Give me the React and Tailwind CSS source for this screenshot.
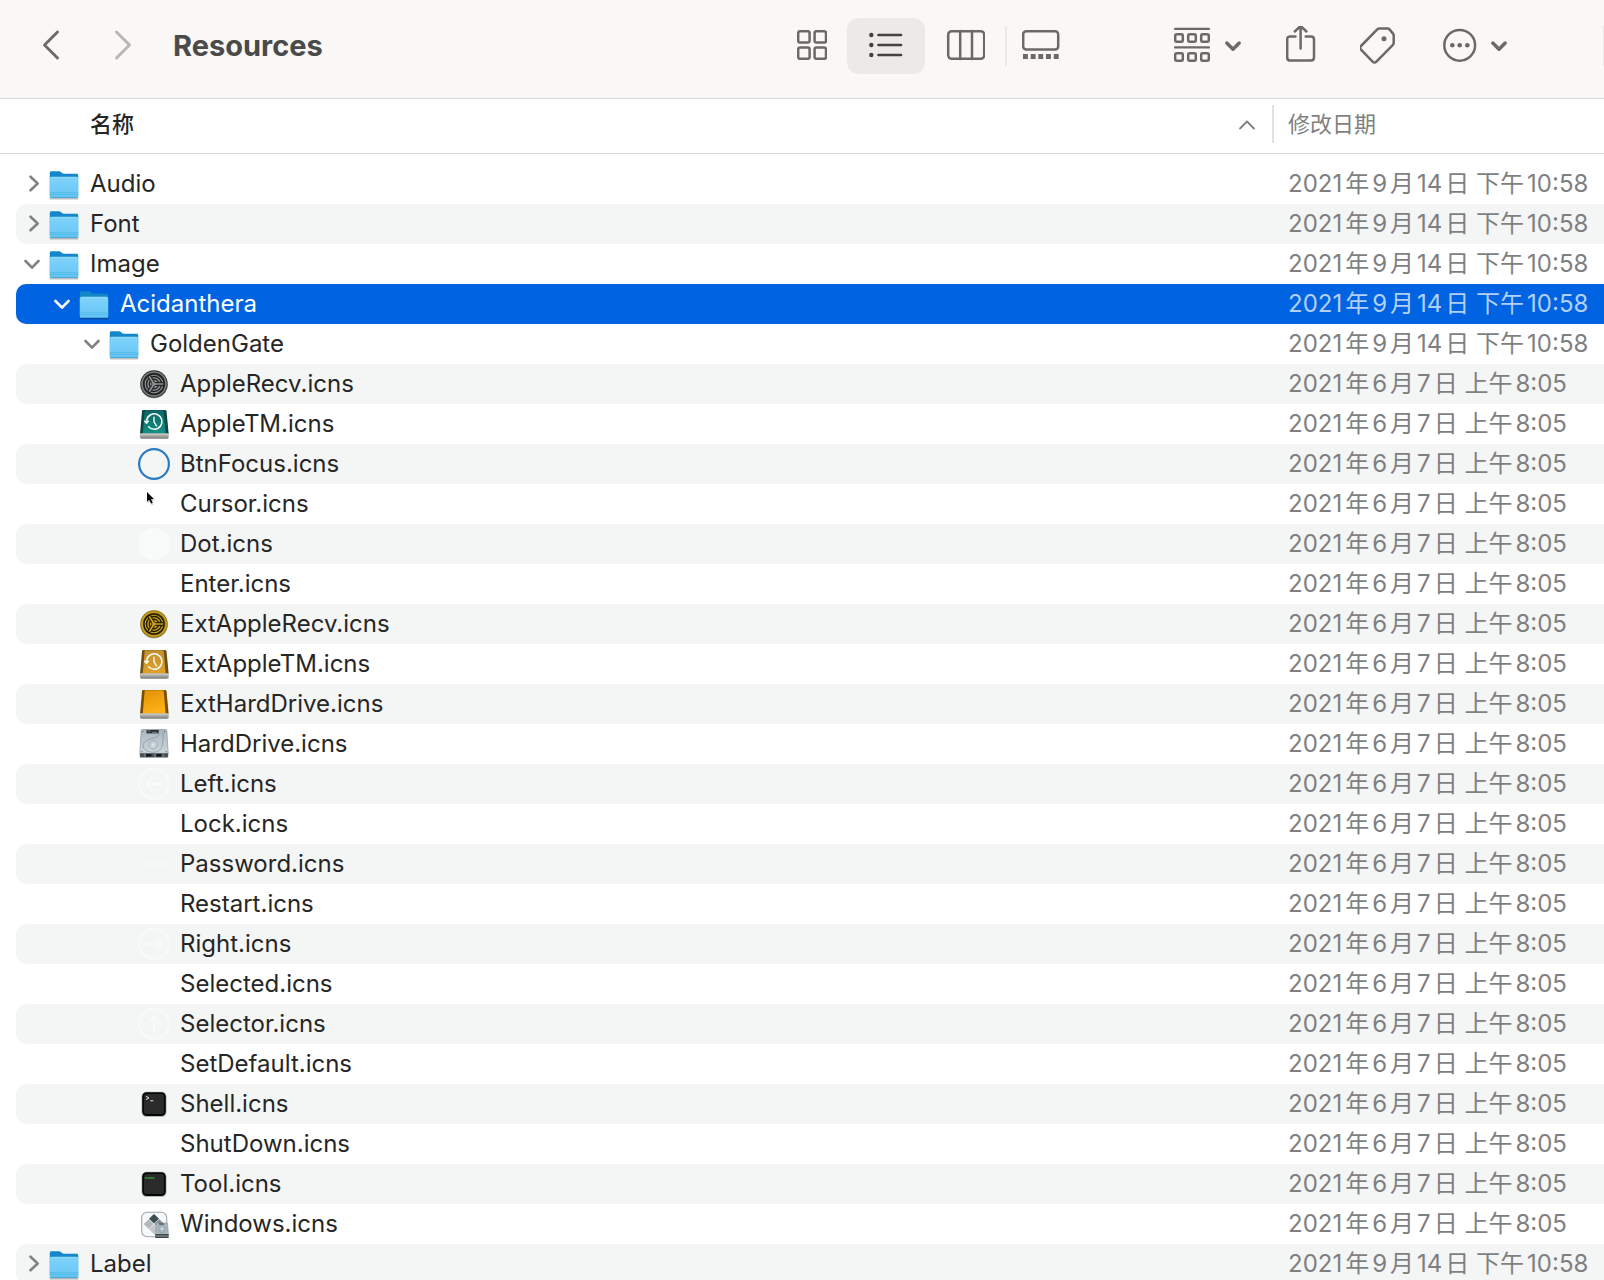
import React, { useState } from 'react';

const FOLDER_DATE = '2021年9月14日 下午10:58';
const FILE_DATE = '2021年6月7日 上午8:05';

const rows = [
  { name: 'Audio', level: 0, folder: true },
  { name: 'Font', level: 0, folder: true },
  { name: 'Image', level: 0, folder: true, open: true },
  { name: 'Acidanthera', level: 1, folder: true, open: true },
  { name: 'GoldenGate', level: 2, folder: true, open: true },
  { name: 'AppleRecv.icns', level: 3, icon: 'recv' },
  { name: 'AppleTM.icns', level: 3, icon: 'tm' },
  { name: 'BtnFocus.icns', level: 3, icon: 'focus' },
  { name: 'Cursor.icns', level: 3, icon: 'cursor' },
  { name: 'Dot.icns', level: 3, icon: 'dot' },
  { name: 'Enter.icns', level: 3 },
  { name: 'ExtAppleRecv.icns', level: 3, icon: 'extRecv' },
  { name: 'ExtAppleTM.icns', level: 3, icon: 'extTm' },
  { name: 'ExtHardDrive.icns', level: 3, icon: 'extDrive' },
  { name: 'HardDrive.icns', level: 3, icon: 'drive' },
  { name: 'Left.icns', level: 3, icon: 'left' },
  { name: 'Lock.icns', level: 3 },
  { name: 'Password.icns', level: 3, icon: 'password' },
  { name: 'Restart.icns', level: 3, icon: 'restart' },
  { name: 'Right.icns', level: 3, icon: 'right' },
  { name: 'Selected.icns', level: 3 },
  { name: 'Selector.icns', level: 3, icon: 'up' },
  { name: 'SetDefault.icns', level: 3 },
  { name: 'Shell.icns', level: 3, icon: 'shell' },
  { name: 'ShutDown.icns', level: 3, icon: 'shutdown' },
  { name: 'Tool.icns', level: 3, icon: 'tool' },
  { name: 'Windows.icns', level: 3, icon: 'windows' },
  { name: 'Label', level: 0, folder: true },
];

const indent = ['pl-2', 'pl-[38px]', 'pl-[68px]', 'pl-[98px]'];

// Shared gradients, referenced by id from the row icons
const Gradients = () => (
  <svg width="0" height="0" className="absolute" aria-hidden="true">
    <defs>
      <linearGradient id="folderFront" x1="0" y1="0" x2="0" y2="1">
        <stop offset="0" stopColor="#7fd3fc" />
        <stop offset="1" stopColor="#66c6f5" />
      </linearGradient>
      <linearGradient id="tealTop" x1="0" y1="0" x2="0" y2="1">
        <stop offset="0" stopColor="#0c6663" />
        <stop offset="1" stopColor="#149086" />
      </linearGradient>
      <linearGradient id="amberTop" x1="0" y1="0" x2="0" y2="1">
        <stop offset="0" stopColor="#c4912c" />
        <stop offset="1" stopColor="#dfa127" />
      </linearGradient>
      <linearGradient id="orangeTop" x1="0" y1="0" x2="0.3" y2="1">
        <stop offset="0" stopColor="#e29106" />
        <stop offset="1" stopColor="#fcb116" />
      </linearGradient>
      <linearGradient id="base" x1="0" y1="0" x2="0" y2="1">
        <stop offset="0" stopColor="#c8c8c4" />
        <stop offset="1" stopColor="#7c7c78" />
      </linearGradient>
      <linearGradient id="steel" x1="0" y1="0" x2="0" y2="1">
        <stop offset="0" stopColor="#a9b6be" />
        <stop offset="1" stopColor="#cdd7dc" />
      </linearGradient>
    </defs>
  </svg>
);

const Folder = () => (
  <>
    <path d="M1.600 29.200h28.800v1.400a1 1 0 0 1-1 1H2.600a1 1 0 0 1-1-1z" fill="#000" opacity=".25" />
    <path d="M1.800 4.800c0-1 .6-1.600 1.600-1.600h7.400c1 0 1.600.3 2.200.9l1 .9c.5.5 1 .7 1.800.7h12.800c1 0 1.600.6 1.600 1.600V28H1.800z" fill="#1487c9" />
    <path d="M1.800 10.600c0-1 .6-1.600 1.600-1.600h25.200c1 0 1.600.6 1.600 1.600v18c0 .9-.6 1.500-1.500 1.500H3.300c-.9 0-1.500-.6-1.500-1.500z" fill="url(#folderFront)" />
    <path d="M3 9.200h26.200" stroke="#9ae0ff" strokeWidth=".8" />
    <path d="M2 24.800h28.200M2 26.600h28.200" stroke="#4bb2e4" strokeWidth=".7" />
    <path d="M2.500 29.400h27.200" stroke="#43a6d8" strokeWidth="1" />
  </>
);

const Gear = ({ rim, edge, dark, metal }) => (
  <>
    <circle cx="16" cy="16.900" r="13.700" fill="#000" opacity=".25" />
    <circle cx="16" cy="16" r="13.700" fill={edge} />
    <circle cx="16" cy="16" r="12" fill="none" stroke={rim} strokeWidth="1.700" />
    <circle cx="16" cy="16" r="10.800" fill={dark} />
    <circle cx="16" cy="16" r="8.800" fill="none" stroke={metal} strokeWidth="1.100" />
    <circle cx="16" cy="16" r="6.800" fill={metal} />
    <circle cx="16" cy="16" r="4.700" fill="none" stroke={dark} strokeWidth="1.500" />
    <path d="M16 16h9.500M16 16l-5-8M16 16l-5 8" stroke={dark} strokeWidth="3.800" />
    <path d="M16 16h9.200M16 16l-4.800-7.800M16 16l-4.800 7.800" stroke={metal} strokeWidth="1.700" />
    <circle cx="16" cy="16" r="1.800" fill={metal} />
  </>
);

const Drive = ({ top, side, clock, led }) => (
  <>
    <path d="M5.400 2h21.600c.8 0 1.300.4 1.500 1.200L30.700 26H2L4 3.200C4.100 2.400 4.600 2 5.400 2z" fill={side} />
    <path d="M6.700 2.300h19L27.600 25.400H4.800z" fill={top} />
    <path d="M2 25.600h28.700v3.400c0 1-.7 1.700-1.700 1.700H3.700c-1 0-1.700-.7-1.700-1.700z" fill="url(#base)" />
    <path d="M2.200 25.900h28.300" stroke="#dededa" strokeWidth=".6" />
    {led && <circle cx="27.500" cy="28.200" r=".8" fill="#58c04a" />}
    {clock && (
      <g fill="none" stroke="#f4fbfa" strokeLinecap="round">
        <path d="M8.700 12A7.700 7.700 0 1 1 10.600 18.800" strokeWidth="1.500" />
        <path d="M16 9.300v4.600l2.500 3.900" strokeWidth="1.400" />
        <path d="M6.500 13h4.400l-2.200 2.700z" fill="#f4fbfa" strokeWidth=".8" />
      </g>
    )}
  </>
);

const HardDrive = () => (
  <>
    <path d="M4.300 1.500h23.400c.6 0 1 .3 1.100.9l1.400 23H1.800l1.400-23c.1-.6.500-.9 1.100-.9z" fill="url(#steel)" stroke="#7e8a91" strokeWidth=".6" />
    <path d="M8.500 2h12.200v3.400H8.500z" fill="#2c3134" />
    <path d="M9.500 3h3M14 4.400h5" stroke="#98a3a9" strokeWidth=".7" />
    <path d="M21 5.400c0 3-3 4.300-7 5.200-5 1.200-8.800 3-8.800 6.900 0 4.200 4.300 6.700 10 6.700 5.600 0 8.600-3 9.300-8 .6-4.500.7-9 .3-12.500" fill="none" stroke="#84919a" strokeWidth=".7" />
    <circle cx="15.200" cy="17" r="4.200" fill="#c6d1d7" stroke="#95a2a9" strokeWidth=".7" />
    <circle cx="15.200" cy="17" r="1.400" fill="#dbe4e8" />
    <g fill="#59656c">
      <circle cx="5" cy="3.600" r=".6" />
      <circle cx="26.800" cy="3.600" r=".6" />
      <circle cx="4" cy="23.700" r=".6" />
      <circle cx="28" cy="23.700" r=".6" />
    </g>
    <path d="M1.800 25.200h28.400v3.300c0 .5-.4.9-.9.9H2.700c-.5 0-.9-.4-.9-.9z" fill="#4a5155" />
    <path d="M8 26h5.500v2.600H8zM18.500 26h5v2.600h-5z" fill="#14171a" />
    <path d="M7 25.800v3M17 25.800v3M25 25.800v3" stroke="#a7b1b6" strokeWidth=".7" />
  </>
);

const Terminal = ({ children }) => (
  <>
    <rect x="3.800" y="5" width="24.600" height="24" rx="4.600" fill="#000" opacity=".25" />
    <rect x="3.600" y="3.800" width="24.800" height="24.600" rx="4.800" fill="#a9bbc0" />
    <rect x="4.200" y="4.300" width="23.600" height="23.600" rx="4.300" fill="#050505" />
    <rect x="6" y="6" width="20" height="20" rx="2.600" fill="#2a2a2b" />
    {children}
  </>
);

const Ring = ({ d }) => (
  <g fill="none" stroke="#f9fafa" strokeWidth="1.800" strokeLinecap="round" strokeLinejoin="round">
    <circle cx="16" cy="16" r="14.800" />
    <path d={d} />
  </g>
);

const Windows = () => (
  <>
    <rect x="3.700" y="4.200" width="25" height="24.600" rx="5.500" fill="#f6f8f9" stroke="#9aa6ac" strokeWidth="1.100" />
    <path d="M16 6l5 4.800-5 4.800-5-4.800z" fill="#3e4d54" />
    <path d="M10.700 11.200l5 4.900-5 4.900-5-4.900z" fill="#b3b7b9" />
    <path d="M21.300 11.200l5 4.900-5 4.900-5-4.900z" fill="#858b8e" />
    <path d="M16 16.400l5 4.900-5 4.900-5-4.900z" fill="#c3c6c8" />
    <path d="M18.300 15h11.200l1 11.500H17.300z" fill="#a8b7be" stroke="#7f8c93" strokeWidth=".5" />
    <circle cx="24" cy="21" r="3.600" fill="none" stroke="#8d9aa1" strokeWidth=".6" />
    <circle cx="24" cy="21" r="1.400" fill="#cfd8dc" />
    <path d="M21 15.400h5v1.200h-5z" fill="#444c50" />
    <path d="M17.300 26h13.300v4H17.300z" fill="#3f464a" />
    <path d="M18 28h12" stroke="#aab4b9" strokeWidth=".8" />
  </>
);

const icons = {
  recv: <Gear rim="#7b7c7d" edge="#2b2c2d" dark="#222324" metal="#919293" />,
  extRecv: <Gear rim="#c9a21a" edge="#8a6d0c" dark="#231c05" metal="#c9a21a" />,
  tm: <Drive top="url(#tealTop)" side="#0a4644" clock />,
  extTm: <Drive top="url(#amberTop)" side="#6e5016" clock />,
  extDrive: <Drive top="url(#orangeTop)" side="#7a4d04" led />,
  drive: <HardDrive />,
  focus: <circle cx="16" cy="16" r="14.900" fill="none" stroke="#2b7bc3" strokeWidth="2.200" />,
  cursor: (
    <>
      <path d="M9.500 5v10.500l2.400-2 1.800 3.800 2-.9-1.700-3.700h3z" fill="#000" opacity=".18" />
      <path d="M9 3.900v9.900l2.200-2 1.800 3.600 1.700-.7-1.700-3.600h3z" fill="#0b0b0b" />
    </>
  ),
  dot: <circle cx="16" cy="16" r="16" fill="#f9fafa" />,
  left: <Ring d="M23.500 16H8.500M14 11L8.500 16l5.500 5" />,
  right: <Ring d="M8.500 16h15M18 11l5.500 5-5.500 5" />,
  up: <Ring d="M16 23.500v-15M11 14l5-5.500 5 5.500" />,
  password: <path d="M2 16h28" stroke="#f7f7f7" strokeWidth="3.500" strokeLinecap="round" />,
  restart: <circle cx="16" cy="16" r="11" fill="#fefefe" />,
  shutdown: <circle cx="16" cy="16" r="12" fill="#fefefe" />,
  shell: (
    <Terminal>
      <path d="M8 8.200l3 1.700-3 1.700M12.300 12.800h3" fill="none" stroke="#e8e8e8" strokeWidth="1" />
    </Terminal>
  ),
  tool: (
    <Terminal>
      <text x="7" y="10.600" fontSize="4" fontWeight="700" fontFamily="Liberation Mono, monospace" fill="#35c24f">exec</text>
    </Terminal>
  ),
  windows: <Windows />,
};

const RowIcon = ({ row }) => (
  <svg viewBox="0 0 32 32" className="h-8 w-8 shrink-0" aria-hidden="true">
    {row.folder ? <Folder /> : icons[row.icon]}
  </svg>
);

const Disclosure = ({ row, selected }) => (
  <button type="button" aria-label={row.name} aria-expanded={!!row.open} className="h-5 w-5 shrink-0">
    <svg
      viewBox="0 0 20 20"
      className="h-5 w-5"
      fill="none"
      stroke={selected ? '#ffffff' : '#828282'}
      strokeWidth="2.600"
      strokeLinecap="round"
      strokeLinejoin="round"
    >
      {row.open ? <path d="M1.500 7L8 13.700 14.500 7" /> : <path d="M6.500 2.700L13.700 9.500l-7.200 6.800" />}
    </svg>
  </button>
);

const Caret = () => (
  <svg viewBox="0 0 18 14" className="h-[14px] w-[18px]" fill="none" stroke="#6b6a69" strokeWidth="3.400" strokeLinecap="round" strokeLinejoin="round">
    <path d="M2.800 4L9 10.300 15.200 4" />
  </svg>
);

const ToolbarIcon = ({ width, children, className }) => (
  <svg
    width={width}
    height="40"
    viewBox={`0 0 ${width} 40`}
    fill="none"
    stroke="#6b6a69"
    strokeWidth="2.500"
    strokeLinecap="round"
    strokeLinejoin="round"
    className={className}
    aria-hidden="true"
  >
    {children}
  </svg>
);

const Toolbar = () => (
  <header className="flex shrink-0 items-center border-b border-[#d6d6d5] bg-[#f9f8f6] pt-[18px] pb-6 pl-[41px]">
    <button type="button" aria-label="后退">
      <ToolbarIcon width={20}>
        <path d="M16.500 6L3.500 19 16.500 32" strokeWidth="2.900" />
      </ToolbarIcon>
    </button>
    <button type="button" aria-label="前进" className="ml-[52px]">
      <ToolbarIcon width={20}>
        <path d="M3.500 6l13 13-13 13" strokeWidth="2.900" stroke="#b7b6b5" />
      </ToolbarIcon>
    </button>
    <h1 className="ml-10 text-[29px] leading-8 font-bold text-[#4b4a4a]">Resources</h1>

    <div className="ml-auto flex items-center">
      <button type="button" aria-label="图标" className="flex h-14 w-[70px] items-center justify-center">
        <ToolbarIcon width={30}>
          <rect x="1.200" y="5.200" width="11.400" height="11.400" rx="1.800" />
          <rect x="17.600" y="5.200" width="11.400" height="11.400" rx="1.800" />
          <rect x="1.200" y="21.400" width="11.400" height="11.400" rx="1.800" />
          <rect x="17.600" y="21.400" width="11.400" height="11.400" rx="1.800" />
        </ToolbarIcon>
      </button>
      <button type="button" aria-label="列表" aria-pressed="true" className="flex h-14 w-[78px] items-center justify-center rounded-xl bg-[#ebeae8]">
        <ToolbarIcon width={34}>
          <g stroke="#434242" strokeWidth="2.700">
            <path d="M9.500 9h22.500M9.500 19h22.500M9.500 29h22.500" />
          </g>
          <g fill="#434242" stroke="none">
            <circle cx="2.300" cy="9" r="2.200" />
            <circle cx="2.300" cy="19" r="2.200" />
            <circle cx="2.300" cy="29" r="2.200" />
          </g>
        </ToolbarIcon>
      </button>
      <button type="button" aria-label="分栏" className="flex h-14 w-20 items-center justify-center">
        <ToolbarIcon width={40}>
          <rect x="3.200" y="5.200" width="36" height="27.600" rx="3.500" />
          <path d="M15.200 5v28M27 5v28" />
        </ToolbarIcon>
      </button>
      <span className="h-10 w-0.5 bg-[#ebeae9]" />
      <button type="button" aria-label="画廊" className="flex h-14 w-[68px] items-center justify-center">
        <ToolbarIcon width={38}>
          <rect x="1.200" y="5.200" width="35" height="18.400" rx="3" />
          <path d="M1 28h4.900v5H1zM8.700 28h4.900v5H8.700zM16.300 28h4.900v5h-4.900zM24 28h4.900v5H24zM31.800 28h4.900v5h-4.900z" fill="#6b6a69" stroke="none" />
        </ToolbarIcon>
      </button>
    </div>

    <div className="ml-[99px] flex items-center gap-11">
      <button type="button" aria-label="群组" className="flex items-center gap-[14px]">
        <ToolbarIcon width={36}>
          <path d="M1 2.800h34M1 21.400h34" strokeWidth="2.200" />
          <rect x="1.200" y="8.200" width="7.600" height="7.600" rx="1.500" />
          <rect x="14.200" y="8.200" width="7.600" height="7.600" rx="1.500" />
          <rect x="27.200" y="8.200" width="7.600" height="7.600" rx="1.500" />
          <rect x="1.200" y="27.200" width="7.600" height="7.600" rx="1.500" />
          <rect x="14.200" y="27.200" width="7.600" height="7.600" rx="1.500" />
          <rect x="27.200" y="27.200" width="7.600" height="7.600" rx="1.500" />
        </ToolbarIcon>
        <Caret />
      </button>
      <button type="button" aria-label="共享">
        <ToolbarIcon width={30}>
          <path d="M9.500 10.400H4.200c-1.800 0-3 1.200-3 3v18.200c0 1.800 1.200 3 3 3h20.800c1.800 0 3-1.200 3-3V13.400c0-1.800-1.200-3-3-3h-5.300" />
          <path d="M14.600 22.500V.2M8.800 5.500L14.600-.1l5.800 5.600" />
        </ToolbarIcon>
      </button>
      <button type="button" aria-label="标签">
        <ToolbarIcon width={36}>
          <path d="M19.400 2.600h8.200c.8 0 1.400.2 1.900.8l3.500 4.200c.5.600.7 1.200.7 2v7.200c0 1-.3 1.700-1 2.400L16.400 35.600c-1.200 1.200-2.600 1.200-3.800 0L1 23.600c-1.200-1.200-1.200-2.400 0-3.600L17 3.600c.7-.7 1.400-1 2.400-1z" />
          <circle cx="24" cy="12.800" r="2.500" fill="#6b6a69" stroke="none" />
        </ToolbarIcon>
      </button>
      <button type="button" aria-label="更多" className="flex items-center gap-[10px]">
        <ToolbarIcon width={40}>
          <circle cx="19.700" cy="19.300" r="15.400" />
          <g fill="#6b6a69" stroke="none">
            <circle cx="12.300" cy="19.300" r="2.300" />
            <circle cx="19.700" cy="19.300" r="2.300" />
            <circle cx="27.300" cy="19.300" r="2.300" />
          </g>
        </ToolbarIcon>
        <Caret />
      </button>
    </div>
    <span className="ml-[95px] h-10 w-px bg-[#ebeae9]" />
  </header>
);

export default function App() {
  const [selected, setSelected] = useState('Acidanthera');

  return (
    <div className="flex h-screen flex-col overflow-hidden bg-white font-['Inter','Noto_Sans_CJK_SC',sans-serif] text-[#262626]">
      <Gradients />
      <Toolbar />
      <main className="min-h-0 flex-1 overflow-hidden">
        <table className="w-full table-fixed border-collapse text-left">
          <colgroup>
            <col />
            <col className="w-[332px]" />
          </colgroup>
          <thead>
            <tr className="border-b border-[#d9d9d9]">
              <th className="h-[54px] p-0 pr-4 pb-1 pl-[90px]" aria-sort="ascending">
                <button type="button" className="flex w-full items-center justify-between text-[22px] leading-8 font-medium">
                  名称
                  <svg viewBox="0 0 18 12" className="h-3 w-[18px]" fill="none" stroke="#7f7f7f" strokeWidth="1.800" strokeLinecap="round" strokeLinejoin="round">
                    <path d="M2 10.500l7-7 7 7" />
                  </svg>
                </button>
              </th>
              <th className="p-0 pb-1">
                <div className="flex h-[38px] items-center border-l-2 border-[#e1e1e1] pl-[14px] text-[22px] leading-8 font-normal text-[#7f7f7f]">
                  修改日期
                </div>
              </th>
            </tr>
          </thead>
          <tbody className="before:block before:h-[10px] before:content-['']">
            {rows.map((row, i) => {
              const isSelected = row.name === selected;
              const bg = isSelected ? 'bg-[#0063e1]' : i % 2 === 1 ? 'bg-[#f4f5f5]' : '';
              return (
                <tr key={row.name} onClick={() => setSelected(row.name)}>
                  <td className="p-0">
                    <div className={`ml-4 flex h-10 items-center rounded-l-[10px] text-[24px] leading-8 ${indent[row.level]} ${bg} ${isSelected ? 'text-white' : ''}`}>
                      {row.folder ? <Disclosure row={row} selected={isSelected} /> : <span className="w-5 shrink-0" />}
                      <span className="ml-1 mr-[10px]"><RowIcon row={row} /></span>
                      <span>{row.name}</span>
                    </div>
                  </td>
                  <td className={`p-0 pl-4 text-[24px] leading-8 whitespace-nowrap [text-autospace:normal] ${bg} ${isSelected ? 'text-[#b2d0f6]' : 'text-[#7f7f7f]'}`}>
                    {row.folder ? FOLDER_DATE : FILE_DATE}
                  </td>
                </tr>
              );
            })}
          </tbody>
        </table>
      </main>
    </div>
  );
}
